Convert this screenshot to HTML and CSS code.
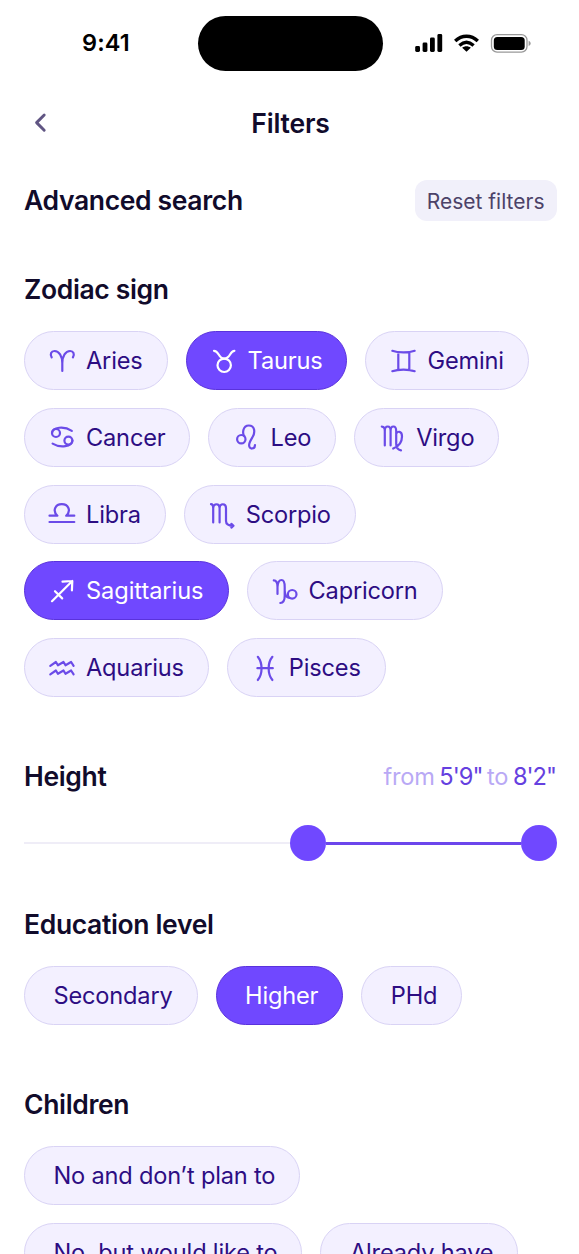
FILE: index.html
```html
<!DOCTYPE html>
<html lang="en">
<head>
<meta charset="utf-8">
<title>Filters</title>
<link rel="stylesheet" href="styles.css">
</head>
<body>
<div class="screen">
  <div class="status">
    <span class="time">9:41</span>
    <span class="island"></span>
    <svg class="indicators" width="118" height="24" viewBox="0 0 118 24">
      <rect x="1.2" y="14" width="4.8" height="6" rx="1.4"/>
      <rect x="8.6" y="10.5" width="4.8" height="9.5" rx="1.4"/>
      <rect x="16" y="5.6" width="4.8" height="14.4" rx="1.4"/>
      <rect x="23.4" y="2" width="4.8" height="18" rx="1.4"/>
      <path class="wifi" d="M41.2 8.9C47.8 2.6 57.2 2.6 63.8 8.9M45.4 13.4C49.9 9.4 55.1 9.4 59.6 13.4"/>
      <path d="M52.5 19.8L48.2 15.8C50.6 13.8 54.4 13.8 56.8 15.8Z"/>
      <rect class="case" x="77.5" y="2.6" width="35.5" height="17.6" rx="5.6"/>
      <rect x="79.8" y="4.9" width="30.9" height="13" rx="3.5"/>
      <path class="tip" d="M114.6 8.8C117.4 10 117.4 12.9 114.6 14Z"/>
    </svg>
  </div>

  <header class="nav">
    <svg class="back" width="16" height="22" viewBox="0 0 16 22"><path d="M12.2 3L4.6 10.6L12.2 18.2"/></svg>
    <h1 class="title">Filters</h1>
  </header>

  <div class="row search">
    <h2 class="heading">Advanced search</h2>
    <button class="reset">Reset filters</button>
  </div>

  <section class="zodiac">
    <h2 class="heading">Zodiac sign</h2>
    <div class="chips">
      <button class="chip sign"><svg class="icon" viewBox="0 0 36 36"><path d="M7.7 14.4C5.6 11 7.3 8 10.5 8C15 8 18.3 13 18.3 20V28M28.9 14.4C31 11 29.3 8 26.1 8C21.6 8 18.3 13 18.3 20"/></svg>Aries</button>
      <button class="chip sign on"><svg class="icon" viewBox="0 0 36 36"><path d="M8 7.8C13.2 7.8 12.2 15.6 18.2 15.6C24.7 15.6 23.7 7.8 28.4 7.8"/><circle cx="18.2" cy="22.3" r="6.7"/></svg>Taurus</button>
      <button class="chip sign"><svg class="icon" viewBox="0 0 36 36"><path d="M7.3 7.8C13 10 24 10 29.7 7.8M7.3 28.2C13 26 24 26 29.7 28.2M13.3 9.5V26.5M24.3 9.5V26.5"/></svg>Gemini</button>
      <button class="chip sign"><svg class="icon" viewBox="0 0 36 36"><circle cx="12" cy="14" r="4"/><circle cx="24.4" cy="21.6" r="4"/><path d="M8 14C8.5 8 20 6.7 27.8 11.8M28.4 21.6C27.9 27.7 16.4 29.3 8.6 24.6"/></svg>Cancer</button>
      <button class="chip sign"><svg class="icon" viewBox="0 0 36 36"><circle cx="13.3" cy="20.2" r="4.2"/><path d="M16.3 17.2C14.3 14.5 14.6 6.5 20.8 6.5C27 6.5 27.3 13.5 24.6 18C22.8 21 21.1 23.5 21.1 26.3C21.1 30.8 27 30.5 27 26"/></svg>Leo</button>
      <button class="chip sign"><svg class="icon" viewBox="0 0 36 36"><path d="M7.8 7.6C10 7.6 10.8 9 10.8 12V26.5M10.8 12C10.8 6 16.6 6 16.6 12V26.5M16.6 12C16.6 6 22.2 6 22.2 12V25C22.2 29 24 30.8 27 31.4M22.2 14.7C23.5 12 28 11.5 28 17.5C28 23 24.5 27.5 19.2 29.5"/></svg>Virgo</button>
      <button class="chip sign"><svg class="icon" viewBox="0 0 36 36"><path d="M5.5 19.7H13.4C8 14.5 11.5 8.2 17.8 8.2C24.1 8.2 27.6 14.5 22.2 19.7H30.3M5.5 26H30.3"/></svg>Libra</button>
      <button class="chip sign"><svg class="icon" viewBox="0 0 36 36"><path d="M7 8.2C8.4 8.2 9.2 9.5 9.2 12V26.5M9.2 12C9.2 7 15.6 7 15.6 12V26.5M15.6 12C15.6 7 22 7 22 12V25C22 28.3 24 29.7 29 29.7M27.4 27.8L29.5 29.7L27.4 31.6Z"/></svg>Scorpio</button>
      <button class="chip sign on"><svg class="icon" viewBox="0 0 36 36"><path d="M8 28.2L28.3 8M18.5 8.6L28.3 8L27.9 17.4M11 18.2L18.2 25.4"/></svg><span class="wide">Sagittarius</span></button>
      <button class="chip sign"><svg class="icon" viewBox="0 0 36 36"><path d="M6.8 7.4C9.4 7.4 10.5 9.5 10.5 14V21M10.5 14C10.9 9 12.2 7 14.5 7C17.2 7 17.7 9.5 17.7 14V23C17.7 27 16.4 29.8 13.3 30M17.7 17.5C17.9 21.5 19.5 24.8 22.5 25"/><circle cx="25.2" cy="21.3" r="4.3"/></svg>Capricorn</button>
      <button class="chip sign"><svg class="icon" viewBox="0 0 36 36"><path d="M6.3 15.8L11.9 12L13.9 15.3L19.5 12L21.5 15.3L27.1 12L29.6 15.8M6.3 24.3L11.9 20.5L13.9 23.8L19.5 20.5L21.5 23.8L27.1 20.5L29.6 24.3"/></svg>Aquarius</button>
      <button class="chip sign"><svg class="icon" viewBox="0 0 36 36"><path d="M10.8 6.8C15.8 13 15.8 23.8 10.8 30M25.4 6.8C20.4 13 20.4 23.8 25.4 30M10.4 18.2H25.8"/></svg>Pisces</button>
    </div>
  </section>

  <section class="height">
    <div class="row">
      <h2 class="heading">Height</h2>
      <div class="range"><span>from</span> <b>5'9"</b> <span>to</span> <b>8'2"</b></div>
    </div>
    <div class="slider">
      <span class="rest"></span><span class="knob"></span><span class="fill"></span><span class="knob"></span>
    </div>
  </section>

  <section class="education">
    <h2 class="heading">Education level</h2>
    <div class="chips">
      <button class="chip">Secondary</button>
      <button class="chip on">Higher</button>
      <button class="chip">PHd</button>
    </div>
  </section>

  <section class="children">
    <h2 class="heading">Children</h2>
    <div class="chips">
      <button class="chip">No and don’t plan to</button>
      <button class="chip">No, but would like to</button>
      <button class="chip">Already have</button>
    </div>
  </section>
</div>
</body>
</html>
```
FILE: styles.css
```css
* { box-sizing: border-box; }
body { margin: 0; background: #fff; }
.screen {
  width: 579px;
  height: 1254px;
  overflow: hidden;
  padding: 0 22px 0 24px;
  font-family: Inter, sans-serif;
  color: #110b2b;
}
button { font: inherit; margin: 0; white-space: nowrap; }
.status {
  display: grid;
  grid-template-columns: 174px 185px 1fr;
  align-items: center;
  height: 55px;
  margin-top: 16px;
}
.time {
  padding: 0 0 2px 58px;
  font-size: 23.5px;
  font-weight: 600;
  line-height: 28px;
  letter-spacing: 0.1px;
  color: #000;
}
.island { height: 55px; border-radius: 28px; background: #000; }
.indicators { margin-left: 31px; }
.wifi { fill: none; stroke: #000; stroke-width: 3.4; }
.case { fill: none; stroke: #999; stroke-width: 1.3; }
.tip { fill: #999; }
.nav {
  display: grid;
  grid-template-columns: 1fr auto 1fr;
  align-items: center;
  height: 40px;
  margin-top: 32px;
}
.back { margin-left: 8px; fill: none; stroke: #605583; stroke-width: 2.9; stroke-linecap: round; stroke-linejoin: round; }
.title, .heading {
  margin: 0;
  font-size: 26.5px;
  line-height: 36px;
  font-weight: 600;
  letter-spacing: -0.35px;
  white-space: nowrap;
}
.title { letter-spacing: -0.2px; }
.row { display: flex; align-items: center; justify-content: space-between; }
.search { height: 41px; margin-top: 37px; }
.search .heading { padding-bottom: 2px; }
.reset {
  height: 41px;
  padding: 1px 12.5px 0 12px;
  border: 0;
  border-radius: 12px;
  background: #f1f0fa;
  color: #4c4268;
  font-size: 21px;
  font-weight: 425;
  letter-spacing: 0;
}
.zodiac { margin-top: 50px; }
.chips { display: flex; flex-wrap: wrap; gap: 17.75px 18px; margin-top: 24px; }
.chip {
  display: flex;
  align-items: center;
  height: 59px;
  padding: 0 24px 0 28.5px;
  border: 1.5px solid #d9d3f5;
  border-radius: 30px;
  background: #f3f0ff;
  color: #2d0d83;
  font-size: 23.6px;
  font-weight: 430;
  letter-spacing: -0.18px;
}
.chip.on { background: #7048ff; border-color: #5a32dc; color: #fff; }
.chip.sign { padding-left: 19px; gap: 6px; }
.wide { letter-spacing: -0.06px; }
.icon {
  width: 36px;
  height: 36px;
  fill: none;
  stroke: #6b4be8;
  stroke-width: 2.2;
  stroke-linecap: round;
  stroke-linejoin: round;
}
.on .icon { stroke: #fff; }
.height { margin-top: 61px; }
.range { padding-right: 1px; font-size: 23.6px; font-weight: 430; color: #b9a9f5; letter-spacing: -0.2px; word-spacing: -1.8px; }
.range b { font-weight: 430; color: #6540e0; letter-spacing: -1px; }
.slider { display: flex; align-items: center; height: 36px; margin-top: 31px; }
.rest { width: 265.5px; height: 2px; background: #efedf7; }
.knob { width: 36px; height: 36px; border-radius: 50%; background: #7048ff; }
.fill { flex: 1; height: 3px; background: #6c46ec; }
.education { margin-top: 45px; }
.children { margin-top: 61px; }
```
